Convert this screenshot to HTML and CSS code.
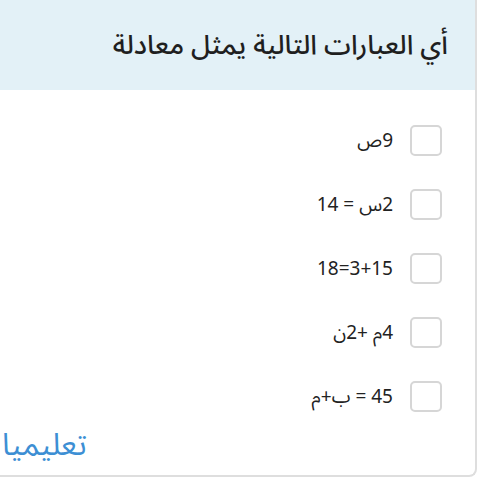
FILE: index.html
```html
<!DOCTYPE html>
<html lang="ar" dir="rtl">
<head>
<meta charset="utf-8">
<link rel="stylesheet" href="styles.css">
</head>
<body>
<div class="card">
  <div class="header">
    <h1 class="question">أي العبارات التالية يمثل معادلة</h1>
  </div>
  <ul class="options">
    <li class="option"><span class="box"></span><span class="label">9ص</span></li>
    <li class="option"><span class="box"></span><span class="label">2س = 14</span></li>
    <li class="option"><span class="box"></span><span class="label">3+15=18</span></li>
    <li class="option"><span class="box"></span><span class="label">4م +2ن</span></li>
    <li class="option"><span class="box"></span><span class="label">45 = ب+م</span></li>
  </ul>
  <div class="footer"><span class="brand">تعليميا</span></div>
</div>
</body>
</html>
```
FILE: styles.css
```css
html, body {
  margin: 0;
  padding: 0;
  background: #ffffff;
}
body {
  width: 480px;
  height: 479px;
  overflow: hidden;
  font-family: "Noto Sans Arabic", "DejaVu Sans", sans-serif;
}
.card {
  box-sizing: border-box;
  width: 477px;
  height: 477px;
  margin-right: 3px;
  border-right: 2px solid #dedede;
  border-bottom: 2px solid #dedede;
  border-bottom-right-radius: 8px;
  display: flex;
  flex-direction: column;
  background: #fff;
}
.header {
  height: 90px;
  background: #e3f1f7;
  display: flex;
  align-items: center;
  padding-right: 27px;
  flex-shrink: 0;
}
.question {
  margin: 0;
  font-size: 27px;
  font-weight: 500;
  color: #1f1f1f;
}
.options {
  list-style: none;
  margin: 0;
  padding: 35px 33px 0 0;
  display: flex;
  flex-direction: column;
  gap: 33px;
}
.option {
  display: flex;
  align-items: center;
  gap: 17px;
  height: 31px;
}
.box {
  box-sizing: border-box;
  width: 32px;
  height: 31px;
  border: 2px solid #d6d6d6;
  border-radius: 5px;
  flex-shrink: 0;
}
.label {
  font-size: 19px;
  color: #222;
}
.footer {
  margin-top: auto;
  padding: 0 0 4px 2px;
  display: flex;
  justify-content: flex-end;
}
.brand {
  font-size: 31px;
  color: #3d8fd4;
}
```
